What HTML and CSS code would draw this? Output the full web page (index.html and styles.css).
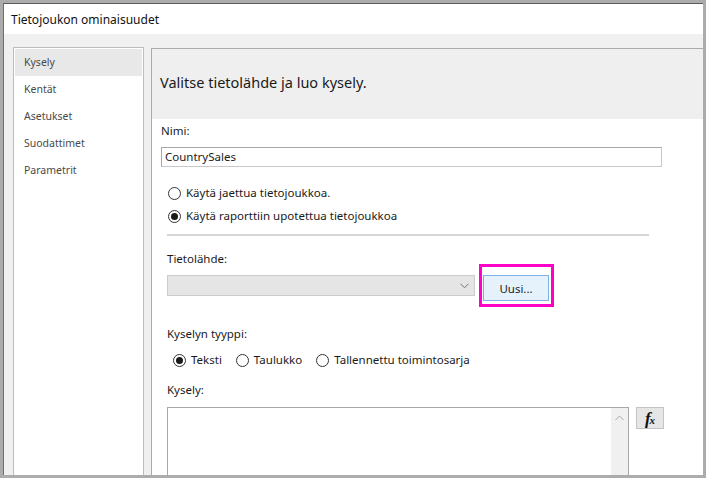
FILE: index.html
```html
<!DOCTYPE html>
<html lang="fi">
<head>
<meta charset="utf-8">
<title>Tietojoukon ominaisuudet</title>
<link rel="stylesheet" href="styles.css">
</head>
<body>
<div class="frame">
  <div class="window">
    <div class="titlebar">Tietojoukon ominaisuudet</div>
    <div class="content">
      <ul class="nav">
        <li class="nav-item active">Kysely</li>
        <li class="nav-item">Kentät</li>
        <li class="nav-item">Asetukset</li>
        <li class="nav-item">Suodattimet</li>
        <li class="nav-item">Parametrit</li>
      </ul>
      <div class="panel">
        <div class="panel-header">Valitse tietolähde ja luo kysely.</div>
        <div class="panel-body">
          <div class="label">Nimi:</div>
          <div class="textbox">CountrySales</div>
          <div class="radios-v">
            <label class="radio"><span class="dot"></span>Käytä jaettua tietojoukkoa.</label>
            <label class="radio"><span class="dot checked"></span>Käytä raporttiin upotettua tietojoukkoa</label>
          </div>
          <div class="section">
            <div class="separator"></div>
            <div class="label sub">Tietolähde:</div>
            <div class="source-row">
              <div class="combo">
                <svg class="chev" width="9" height="6" viewBox="0 0 9 6"><path d="M0.5 0.8 L4.5 4.8 L8.5 0.8" fill="none" stroke="#707070" stroke-width="1"/></svg>
              </div>
              <div class="highlight"><div class="btn">Uusi...</div></div>
            </div>
            <div class="label sub type-label">Kyselyn tyyppi:</div>
            <div class="radios-h">
              <label class="radio"><span class="dot checked"></span>Teksti</label>
              <label class="radio"><span class="dot"></span>Taulukko</label>
              <label class="radio"><span class="dot"></span>Tallennettu toimintosarja</label>
            </div>
            <div class="label sub query-label">Kysely:</div>
            <div class="query-row">
              <div class="textarea">
                <div class="scrollbar">
                  <svg width="9" height="6" viewBox="0 0 9 6"><path d="M0.5 5 L4.5 1 L8.5 5" fill="none" stroke="#a8a8a8" stroke-width="1"/></svg>
                </div>
              </div>
              <div class="fx"><i>f</i><span>x</span></div>
            </div>
          </div>
        </div>
      </div>
    </div>
  </div>
</div>
</body>
</html>
```

FILE: styles.css
```css
* { box-sizing: border-box; }
html, body { margin: 0; padding: 0; }
body {
  width: 706px;
  height: 478px;
  overflow: hidden;
  background: #acacac;
  font-family: "Noto Sans", "Open Sans", sans-serif;
  font-size: 11.5px;
  color: #1a1a1a;
}
.frame {
  padding: 3px;
  height: 478px;
}
.window {
  width: 700px;
  height: 472px;
  border-top: 1px solid #5e5e5e;
  border-left: 1px solid #6e6e6e;
  background: #f0f0f0;
  display: flex;
  flex-direction: column;
  overflow: hidden;
}
.titlebar {
  height: 30px;
  background: #ffffff;
  padding-left: 7px;
  display: flex;
  align-items: center;
  font-size: 12px;
  color: #111;
  flex: none;
}
.content {
  flex: 1;
  display: flex;
  padding: 13px 0 0 9px;
  gap: 7px;
  min-height: 0;
}
.nav {
  list-style: none;
  margin: 0;
  padding: 1px;
  width: 131px;
  background: #fff;
  border: 1px solid #bdbdbd;
  border-bottom: none;
  flex: none;
}
.nav-item {
  height: 27px;
  line-height: 27px;
  padding-left: 9px;
  color: #4a4a4a;
  font-size: 10.5px;
}
.nav-item.active {
  background: #e8e8e8;
}
.panel {
  flex: 1;
  margin-top: 1px;
  border-top: 1px solid #ababab;
  border-left: 1px solid #ababab;
  background: #fff;
  display: flex;
  flex-direction: column;
}
.panel-header {
  height: 70px;
  background: #efefef;
  padding: 23px 0 0 8px;
  font-size: 14.5px;
  color: #1a1a1a;
  flex: none;
}
.panel-body {
  padding: 4px 0 0 9px;
}
.label {
  height: 16px;
  line-height: 16px;
  color: #1a1a1a;
}
.textbox {
  margin-top: 8px;
  width: 501px;
  height: 20px;
  border: 1px solid #a8a8a8;
  border-right-color: #c8c8c8;
  border-bottom-color: #c8c8c8;
  padding-left: 3px;
  line-height: 18px;
}
.radios-v {
  margin-top: 18px;
  margin-left: 7px;
  display: flex;
  flex-direction: column;
  gap: 7px;
}
.radio {
  display: flex;
  align-items: center;
  gap: 5px;
  height: 16px;
  line-height: 16px;
}
.dot {
  width: 13px;
  height: 13px;
  border: 1px solid #333;
  border-radius: 50%;
  background: #fff;
  display: flex;
  align-items: center;
  justify-content: center;
  flex: none;
}
.dot.checked::after {
  content: "";
  width: 7px;
  height: 7px;
  border-radius: 50%;
  background: #1a1a1a;
}
.section {
  padding-left: 6px;
}
.separator {
  margin-top: 10px;
  width: 482px;
  height: 2px;
  background: #d6d6d6;
}
.sub {
  margin-top: 15px;
}
.source-row {
  display: flex;
  align-items: flex-start;
  margin-top: -3px;
}
.combo {
  margin-top: 11px;
  width: 308px;
  height: 21px;
  background: #e5e5e5;
  border: 1px solid #cccccc;
  display: flex;
  align-items: center;
  justify-content: flex-end;
  padding-right: 5px;
}
.highlight {
  margin-left: 4px;
  border: 3px solid #ff00c8;
  padding: 8px 2px 3px 1px;
}
.btn {
  width: 66px;
  height: 26px;
  background: #e5f1fb;
  border: 1px solid #7cb2e6;
  display: flex;
  align-items: center;
  justify-content: center;
  color: #1a1a1a;
}
.type-label {
  margin-top: 19px;
}
.radios-h {
  margin-top: 10px;
  margin-left: 6px;
  display: flex;
  gap: 14px;
}
.query-label {
  margin-top: 14px;
}
.query-row {
  margin-top: 9px;
  display: flex;
  align-items: flex-start;
  gap: 7px;
}
.textarea {
  width: 462px;
  height: 80px;
  border: 1px solid #a8a8a8;
  display: flex;
  justify-content: flex-end;
}
.scrollbar {
  width: 17px;
  height: 100%;
  background: #f0f0f0;
  display: flex;
  justify-content: center;
  padding-top: 7px;
}
.fx {
  width: 28px;
  height: 22px;
  background: #e6e6e6;
  border: 1px solid #c4c4c4;
  display: flex;
  align-items: center;
  justify-content: center;
  font-family: "Liberation Serif", serif;
  font-weight: bold;
  font-style: italic;
  color: #111;
}
.fx i { font-size: 17px; line-height: 1; }
.fx span { font-size: 11px; margin-top: 4px; margin-left: -1px; }
```
